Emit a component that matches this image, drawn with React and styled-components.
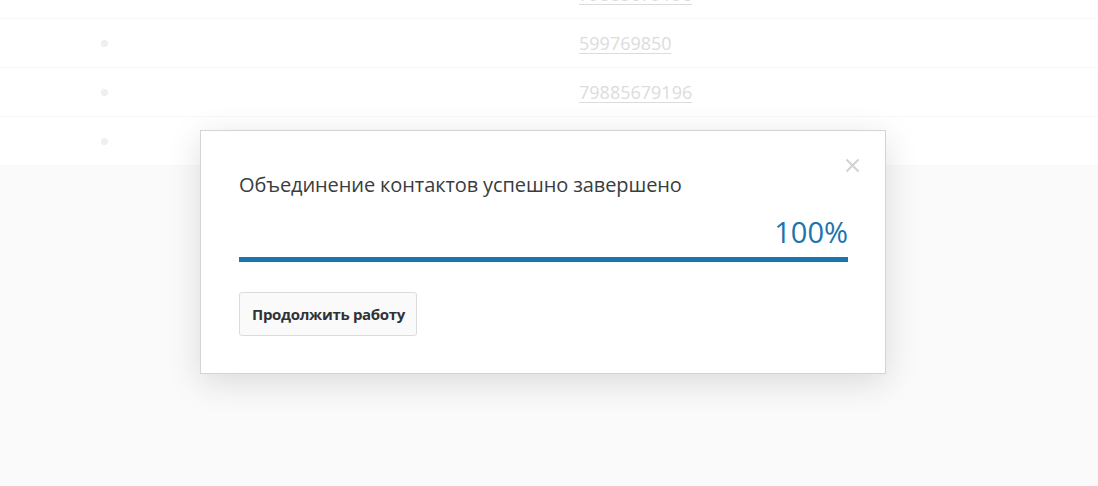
import React from 'react';
import styled, { createGlobalStyle } from 'styled-components';

const GlobalStyle = createGlobalStyle`
  html, body {
    margin: 0;
    padding: 0;
    background: #fafafa;
    font-family: "Open Sans", "Noto Sans", sans-serif;
  }
`;

const Page = styled.div`
  position: relative;
  width: 100%;
  height: 486px;
  overflow: hidden;
  background: #fafafa;
`;

const ListArea = styled.div`
  height: 166px;
  background: #ffffff;
  overflow: hidden;
`;

const List = styled.ul`
  list-style: none;
  margin: -30px 0 0;
  padding: 0;
`;

const Row = styled.li`
  display: flex;
  align-items: center;
  height: 48px;
  border-bottom: 1px solid #f8f8f8;
`;

const Bullet = styled.span`
  flex: none;
  width: 7px;
  height: 7px;
  margin-left: 101px;
  border-radius: 50%;
  background: #efefef;
`;

const Phone = styled.a`
  margin-left: 471px;
  font-size: 18px;
  color: #dcdcdc;
  text-decoration: underline;
  text-underline-offset: 3px;
`;

const Modal = styled.div`
  position: absolute;
  left: 200px;
  top: 130px;
  box-sizing: border-box;
  width: 686px;
  height: 244px;
  background: #ffffff;
  border: 1px solid #d4d4d4;
  box-shadow: 0 8px 32px rgba(0, 0, 0, 0.13);
  display: flex;
  flex-direction: column;
  padding: 40px 37px 0 38px;
`;

const Close = styled.button`
  position: absolute;
  top: 26px;
  right: 25px;
  width: 16px;
  height: 16px;
  padding: 0;
  border: none;
  background: none;
  cursor: pointer;
  display: flex;
  align-items: center;
  justify-content: center;
`;

const Title = styled.div`
  font-size: 20px;
  line-height: 27px;
  letter-spacing: -0.1px;
  color: #393c40;
`;

const Percent = styled.div`
  margin-top: 16px;
  text-align: right;
  font-size: 29px;
  line-height: 35px;
  color: #1a74ad;
`;

const Track = styled.div`
  margin-top: 8px;
  height: 5px;
  background: #e6e6e6;
`;

const Fill = styled.div`
  height: 100%;
  background: #1a74ad;
`;

const Actions = styled.div`
  margin-top: 30px;
  display: flex;
`;

const Button = styled.button`
  height: 44px;
  padding: 0 11px 0 12px;
  border: 1px solid #dcdcdc;
  border-radius: 3px;
  background: #fafafa;
  font-family: "Open Sans", "Noto Sans", sans-serif;
  font-size: 15px;
  font-weight: 700;
  letter-spacing: -0.3px;
  color: #2f3237;
  cursor: pointer;
`;

const phones = ['79885679196', '599769850', '79885679196', ''];

export default function App() {
  const progress = 100;
  return (
    <Page>
      <GlobalStyle />
      <ListArea>
        <List>
          {phones.map((p, i) => (
            <Row key={i}>
              <Bullet />
              {p && <Phone href="#">{p}</Phone>}
            </Row>
          ))}
        </List>
      </ListArea>
      <Modal>
        <Close aria-label="Закрыть">
          <svg width="15" height="15" viewBox="0 0 15 15">
            <path d="M1.5 1.5 L13.5 13.5 M13.5 1.5 L1.5 13.5" stroke="#d2d2d2" strokeWidth="2" />
          </svg>
        </Close>
        <Title>Объединение контактов успешно завершено</Title>
        <Percent>{progress}%</Percent>
        <Track>
          <Fill style={{ width: `${progress}%` }} />
        </Track>
        <Actions>
          <Button>Продолжить работу</Button>
        </Actions>
      </Modal>
    </Page>
  );
}
